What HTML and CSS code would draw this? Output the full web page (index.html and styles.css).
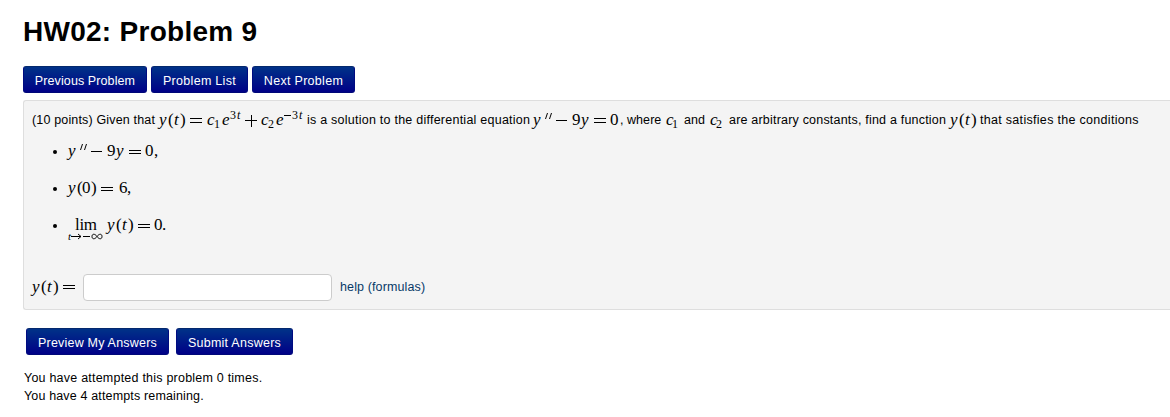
FILE: index.html
```html
<!DOCTYPE html>
<html lang="en">
<head>
<meta charset="utf-8">
<title>HW02: Problem 9</title>
<link rel="stylesheet" href="styles.css">
</head>
<body>
<h1 class="title">HW02: Problem 9</h1>
<nav class="nav">
  <a class="btn btn-prev">Previous Problem</a>
  <a class="btn btn-list">Problem List</a>
  <a class="btn btn-next">Next Problem</a>
</nav>
<main class="problem">
  <div class="statement">
    <span class="prose intro">(10 points) Given that</span>
    <svg class="math" width="148" height="26">
      <text class="v" x="0" y="18">y</text><text x="9" y="18">(</text><text class="v" x="15" y="18">t</text><text x="21" y="18">)</text>
      <path d="M31 11.5h12M31 15.5h12"/>
      <text class="v" x="48" y="18">c</text><text class="sub" x="55" y="21">1</text>
      <text class="v" x="63" y="18">e</text><text class="sub" x="71" y="12">3</text><text class="sub v" x="78" y="12">t</text>
      <path d="M86 13.5h12M92.500 8v12"/>
      <text class="v" x="102" y="18">c</text><text class="sub" x="109" y="21">2</text>
      <text class="v" x="117" y="18">e</text><path d="M125 8.500h7"/><text class="sub" x="133" y="12">3</text><text class="sub v" x="140" y="12">t</text>
    </svg>
    <span class="prose solution">is a solution to the differential equation</span>
    <svg class="math" width="87" height="26">
      <text class="v" x="0" y="18">y</text><path d="M14.500 6l-2 6M18.500 6l-2 6M23 13.500h11"/>
      <text x="39" y="18">9</text><text class="v" x="48" y="18">y</text><path d="M61 11.5h12M61 15.5h12"/><text x="77" y="18">0</text>
    </svg>
    <span class="prose where">, where</span>
    <svg class="math" width="18" height="26"><text class="v" x="0" y="18">c</text><text class="sub" x="6" y="21">1</text></svg>
    <span class="prose and">and</span>
    <svg class="math" width="19" height="26"><text class="v" x="0" y="18">c</text><text class="sub" x="6" y="21">2</text></svg>
    <span class="prose constants">are arbitrary constants, find a function</span>
    <svg class="math" width="30" height="26"><text class="v" x="0" y="18">y</text><text x="9" y="18">(</text><text class="v" x="15" y="18">t</text><text x="21" y="18">)</text></svg>
    <span class="prose that">that satisfies the conditions</span>
  </div>
  <ul class="conditions">
    <li><svg class="math" width="110" height="26">
      <text class="v" x="0" y="17">y</text><path d="M14.500 5l-2 6M18.500 5l-2 6M23 12.500h11"/>
      <text x="39" y="17">9</text><text class="v" x="48" y="17">y</text><path d="M61 11.5h12M61 14.5h12"/><text x="77" y="17">0</text><text x="86" y="17">,</text>
    </svg></li>
    <li><svg class="math" width="110" height="26">
      <text class="v" x="0" y="17">y</text><text x="9" y="17">(</text><text x="14" y="17">0</text><text x="23" y="17">)</text>
      <path d="M33 11.5h12M33 14.5h12"/><text x="51" y="17">6</text><text x="59" y="17">,</text>
    </svg></li>
    <li><svg class="math" width="110" height="32">
      <text x="7" y="17" textLength="22">lim</text>
      <text class="small v" x="0" y="27">t</text><path d="M3 23.500h10M10 21l3 2.500l-3 2.500M15 23.500h7"/>
      <path d="M29 23.500c-2-3-5-3-5 0s3 3 5 0s5-3 5 0s-3 3-5 0z"/>
      <text class="v" x="39" y="17">y</text><text x="48" y="17">(</text><text class="v" x="54" y="17">t</text><text x="60" y="17">)</text>
      <path d="M70 11.5h12M70 14.5h12"/><text x="86" y="17">0</text><text x="94" y="17">.</text>
    </svg></li>
  </ul>
  <div class="answer">
    <svg class="math" width="51" height="26"><text class="v" x="0" y="18">y</text><text x="9" y="18">(</text><text class="v" x="15" y="18">t</text><text x="21" y="18">)</text><path d="M31 11.5h12M31 14.5h12"/></svg>
    <input class="field" type="text" aria-label="y(t)">
    <a class="help">help (formulas)</a>
  </div>
</main>
<div class="actions">
  <button class="btn btn-preview">Preview My Answers</button>
  <button class="btn btn-submit">Submit Answers</button>
</div>
<div class="attempts">
  <p class="tries">You have attempted this problem 0 times.</p>
  <p class="left">You have 4 attempts remaining.</p>
</div>
</body>
</html>
```
FILE: styles.css
```css
* { box-sizing: border-box; }
body { margin: 0; padding: 14px 0 0 23px; height: 417px; overflow: hidden; background: #fff; color: #000; font: 12.5px/18px "Liberation Sans", Arial, sans-serif; }
.title { margin: 0; height: 52px; font-size: 28px; line-height: 35px; font-weight: bold; letter-spacing: .27px; }
.nav { display: flex; gap: 4px; height: 34px; }
.btn { display: block; height: 27px; padding: 1px 0 0; border: 1px solid #001f70; border-color: #04286d #000b80 #000878; border-radius: 3px; background: linear-gradient(#003288, #000087); color: #fff; font: 12.5px/26px "Liberation Sans", Arial, sans-serif; text-align: center; white-space: nowrap; }
.btn-prev { width: 124px; letter-spacing: .1px; }
.btn-list { width: 97px; letter-spacing: .3px; }
.btn-next { width: 103px; letter-spacing: .3px; }
.problem { height: 210px; padding: 6px 0 0 8px; border: 1px solid #dedede; border-right: 0; border-radius: 3px 0 0 3px; background: #f4f4f4; }
.statement { display: flex; height: 26px; }
.prose { flex: none; line-height: 26px; white-space: nowrap; }
.intro { width: 127px; letter-spacing: .16px; }
.solution { width: 226px; letter-spacing: .24px; }
.where { width: 46px; letter-spacing: .05px; }
.and { width: 26px; }
.constants { width: 221px; letter-spacing: .2px; }
.that { letter-spacing: .3px; }
.math { display: block; flex: none; overflow: visible; font-family: "Liberation Serif", serif; font-size: 17px; fill: #000; }
.math path { fill: none; stroke: #000; stroke-width: 1; }
.v { font-style: italic; }
.math .sub { font-size: 12px; }
.math .small { font-size: 11px; }
.conditions { margin: 0; padding: 6px 0 0 36px; list-style: none; height: 134px; }
.conditions li { display: flex; height: 37px; }
.conditions li::before { content: ""; width: 4px; height: 4px; margin: 11px 11px 0 -15px; border-radius: 50%; background: #000; }
.answer { display: flex; align-items: flex-start; margin-top: 7px; }
.field { width: 249px; height: 27px; margin: 0; border: 1px solid #ccc; border-radius: 4px; background: #fff; }
.help { margin-left: 8px; line-height: 26px; color: #083968; letter-spacing: .12px; }
.actions { display: flex; gap: 7px; padding: 18px 0 0 3px; height: 59px; }
.btn-preview { width: 143px; letter-spacing: .2px; }
.btn-submit { width: 117px; letter-spacing: .25px; }
.attempts { padding-left: 1px; }
.attempts p { margin: 0; letter-spacing: .22px; }
.attempts .left { letter-spacing: .15px; }
```
